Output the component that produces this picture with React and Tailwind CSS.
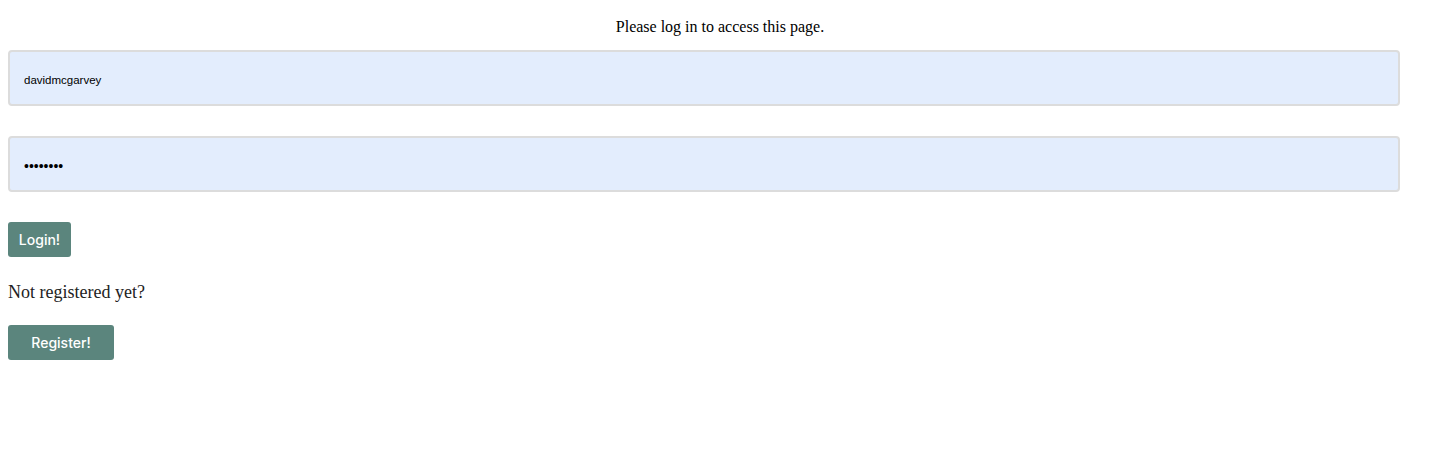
import React from 'react';

export default function App() {
  return (
    <div className="w-[1440px] h-[455px] bg-white pt-[18px] px-2" style={{ fontFamily: '"Liberation Serif", serif' }}>
      <p className="text-center text-[16px] leading-[18px] text-black">Please log in to access this page.</p>

      <form className="mt-[14px] flex flex-col items-start" onSubmit={(e) => e.preventDefault()}>
        <input
          type="text"
          defaultValue="davidmcgarvey"
          className="w-[1392px] h-[56px] rounded-[4px] border-2 border-[#dcdcdc] bg-[#e3edfd] pl-[14px] pt-[4px] text-[11.5px] text-black outline-none font-['Liberation_Sans',sans-serif]"
        />
        <input
          type="password"
          defaultValue="password"
          className="mt-[30px] w-[1392px] h-[56px] rounded-[4px] border-2 border-[#dcdcdc] bg-[#e3edfd] pl-[14px] pt-[4px] text-[14px] text-black outline-none font-['Liberation_Sans',sans-serif]"
        />
        <button className="mt-[30px] h-[35px] w-[63px] rounded-[3px] bg-[#5b857d] text-[14px] font-medium text-white font-['Inter',sans-serif]">
          Login!
        </button>
      </form>

      <p className="mt-[24px] text-[18px] leading-[22px] text-[#222]">Not registered yet?</p>

      <button className="mt-[22px] h-[35px] w-[106px] rounded-[3px] bg-[#5b857d] text-[14px] font-medium text-white font-['Inter',sans-serif]">
        Register!
      </button>
    </div>
  );
}
